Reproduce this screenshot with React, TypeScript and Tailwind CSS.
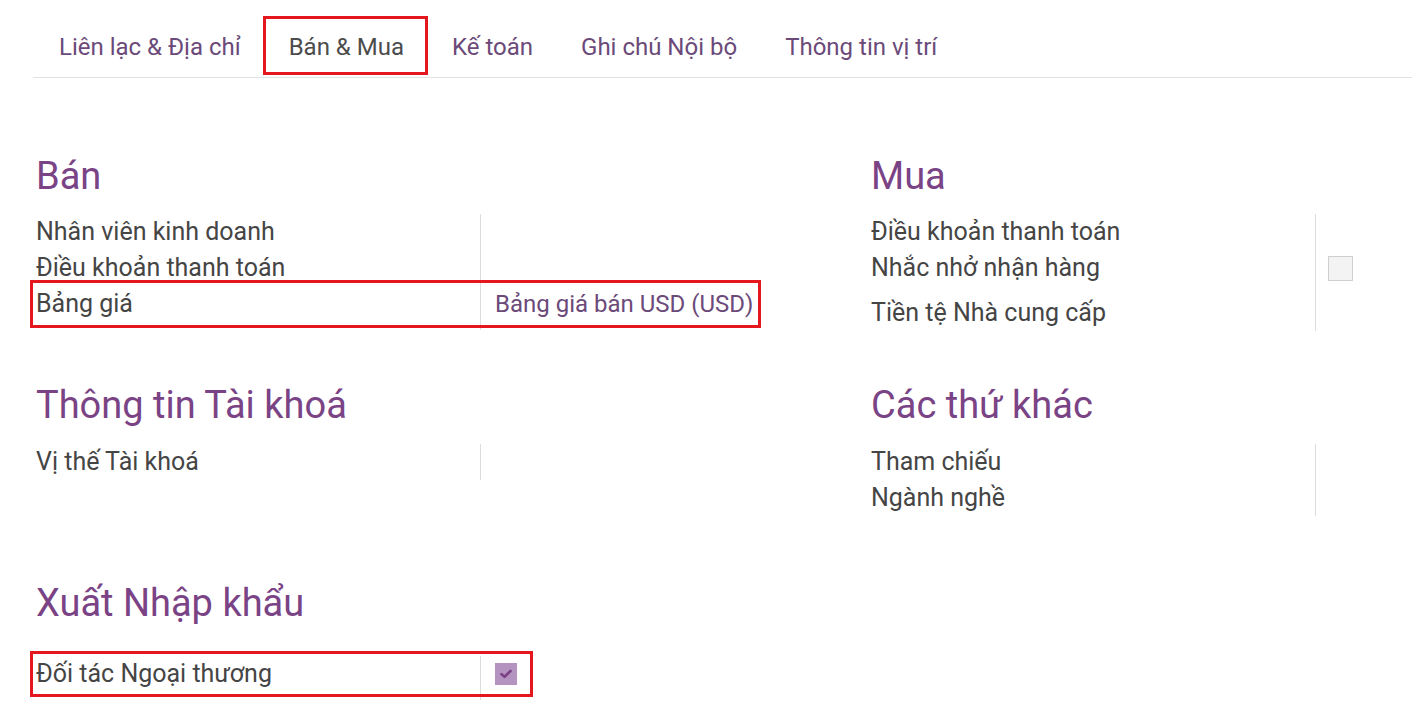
import React from 'react';

interface Field {
  label: string;
  value?: React.ReactNode;
  height: number;
  mark?: { top: number; left: number; width: number; height: number };
}

const tabs = ['Liên lạc & Địa chỉ', 'Bán & Mua', 'Kế toán', 'Ghi chú Nội bộ', 'Thông tin vị trí'];

function Checkbox({ checked }: { checked?: boolean }) {
  if (checked) {
    return (
      <div className="w-[22px] h-[22px] bg-[#b593c0] flex items-center justify-center">
        <svg width="12" height="10" viewBox="0 0 12 10">
          <path d="M1.5 5.2 L4.6 7.8 L10.5 2" fill="none" stroke="#7a4284" strokeWidth="2.6" strokeLinecap="round" strokeLinejoin="round" />
        </svg>
      </div>
    );
  }
  return <div className="w-[25px] h-[25px] -ml-[2px] bg-[#f3f3f3] border border-[#cfcfcf]" />;
}

function Section({ title, fields, headGap = 17 }: { title: string; fields: Field[]; headGap?: number }) {
  return (
    <div>
      <h2
        className="text-[38px] leading-[42px] text-[#7a4385] font-normal"
        style={{ marginBottom: headGap }}
      >
        {title}
      </h2>
      <div>
        {fields.map((f) => (
          <div key={f.label} className="relative flex" style={{ height: f.height }}>
            <div className="w-[444px] text-[25px] leading-[36px] text-[#454545]">{f.label}</div>
            <div className="flex-1 border-l border-[#dcdcdc] pl-[14px] text-[24px] leading-[36px] text-[#6b4a79]">
              {f.value}
            </div>
            {f.mark && (
              <div
                className="absolute border-[3px] border-[#e4161e] pointer-events-none"
                style={{ top: f.mark.top, left: f.mark.left, width: f.mark.width, height: f.mark.height }}
              />
            )}
          </div>
        ))}
      </div>
    </div>
  );
}

export default function App() {
  return (
    <div className="min-h-screen bg-white pt-[17px] font-['Roboto',sans-serif]">
      {/* Tabs */}
      <div className="ml-[33px] border-b border-[#e2e2e2] h-[61px]">
        <div className="flex h-[60px] pl-[2px]">
          {tabs.map((t, i) => (
            <div
              key={t}
              className={`relative flex items-center px-6 text-[24px] ${i === 1 ? 'text-[#4c4c4c]' : 'text-[#6b4a79]'}`}
            >
              {t}
              {i === 1 && (
                <div className="absolute left-[-2px] right-0 top-[-1px] h-[59px] border-[3px] border-[#e4161e]" />
              )}
            </div>
          ))}
        </div>
      </div>

      <div className="pl-[36px]">
        {/* Bán / Mua */}
        <div className="grid grid-cols-[835px_1fr] mt-[77px]">
          <Section
            title="Bán"
            fields={[
              { label: 'Nhân viên kinh doanh', height: 36 },
              { label: 'Điều khoản thanh toán', height: 36 },
              {
                label: 'Bảng giá',
                value: 'Bảng giá bán USD (USD)',
                height: 44,
                mark: { top: -6, left: -6, width: 731, height: 48 },
              },
            ]}
          />
          <Section
            title="Mua"
            fields={[
              { label: 'Điều khoản thanh toán', height: 36 },
              {
                label: 'Nhắc nhở nhận hàng',
                value: (
                  <div className="pt-[6px]">
                    <Checkbox />
                  </div>
                ),
                height: 45,
              },
              { label: 'Tiền tệ Nhà cung cấp', height: 36 },
            ]}
          />
        </div>

        {/* Thông tin Tài khoá / Các thứ khác */}
        <div className="grid grid-cols-[835px_1fr] mt-[53px]">
          <Section title="Thông tin Tài khoá" headGap={18} fields={[{ label: 'Vị thế Tài khoá', height: 36 }]} />
          <Section
            title="Các thứ khác"
            headGap={18}
            fields={[
              { label: 'Tham chiếu', height: 36 },
              { label: 'Ngành nghề', height: 36 },
            ]}
          />
        </div>

        {/* Xuất Nhập khẩu */}
        <div className="mt-[66px] w-[835px]">
          <Section
            title="Xuất Nhập khẩu"
            headGap={32}
            fields={[
              {
                label: 'Đối tác Ngoại thương',
                value: (
                  <div className="pt-[7px]">
                    <Checkbox checked />
                  </div>
                ),
                height: 44,
                mark: { top: -5, left: -6, width: 503, height: 46 },
              },
            ]}
          />
        </div>
      </div>
    </div>
  );
}
